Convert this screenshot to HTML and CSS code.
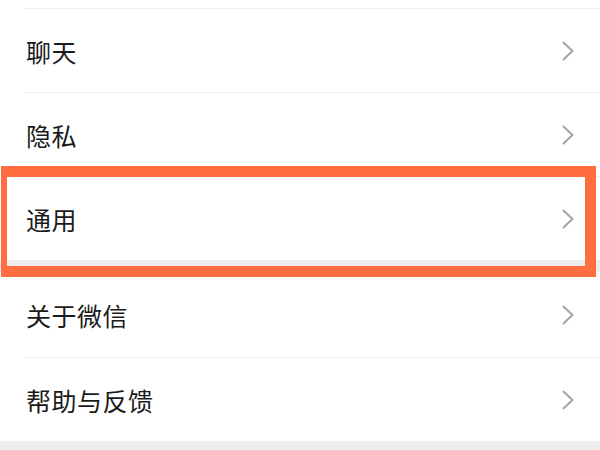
FILE: index.html
```html
<!DOCTYPE html>
<html lang="zh">
<head>
<meta charset="utf-8">
<link rel="stylesheet" href="styles.css">
</head>
<body>
<div class="page">
  <div class="group">
    <div class="row-cut"></div>
    <div class="row"><span class="label">聊天</span><svg class="chev" viewBox="0 0 12 20"><polyline points="1.5,1.5 10.5,10 1.5,18.5"/></svg></div>
    <div class="row"><span class="label">隐私</span><svg class="chev" viewBox="0 0 12 20"><polyline points="1.5,1.5 10.5,10 1.5,18.5"/></svg></div>
    <div class="row"><span class="label">通用</span><svg class="chev" viewBox="0 0 12 20"><polyline points="1.5,1.5 10.5,10 1.5,18.5"/></svg></div>
  </div>
  <div class="gap"></div>
  <div class="group">
    <div class="row first"><span class="label">关于微信</span><svg class="chev" viewBox="0 0 12 20"><polyline points="1.5,1.5 10.5,10 1.5,18.5"/></svg></div>
    <div class="row"><span class="label">帮助与反馈</span><svg class="chev" viewBox="0 0 12 20"><polyline points="1.5,1.5 10.5,10 1.5,18.5"/></svg></div>
  </div>
  <div class="gap tail"></div>
  <div class="highlight"></div>
</div>
</body>
</html>
```
FILE: styles.css
```css
html, body {
  margin: 0;
  padding: 0;
  background: #ffffff;
}
.page {
  position: relative;
  width: 600px;
  height: 450px;
  overflow: hidden;
  font-family: "Noto Sans CJK SC", "Noto Sans", sans-serif;
  color: #1b1b1b;
}
.group {
  background: #ffffff;
}
.row-cut {
  height: 8px;
}
.row {
  height: 83px;
  margin-left: 25px;
  padding: 0 26px 0 1px;
  display: flex;
  align-items: center;
  justify-content: space-between;
  border-top: 1px solid #ededed;
}
.first {
  height: 85px;
  border-top: none;
}
.label {
  font-size: 25px;
  line-height: 1;
  letter-spacing: 0.5px;
  padding-top: 2px;
}
.chev {
  width: 12px;
  height: 20px;
  fill: none;
  stroke: #a3a3a3;
  stroke-width: 2;
  stroke-linecap: round;
  stroke-linejoin: round;
}
.gap {
  height: 12px;
  background: #ededed;
}
.tail {
  height: 20px;
}
.highlight {
  position: absolute;
  left: 1px;
  top: 166px;
  width: 578px;
  height: 89px;
  border-style: solid;
  border-color: #ff6d40;
  border-width: 11px 11px 11px 6px;
}
```
